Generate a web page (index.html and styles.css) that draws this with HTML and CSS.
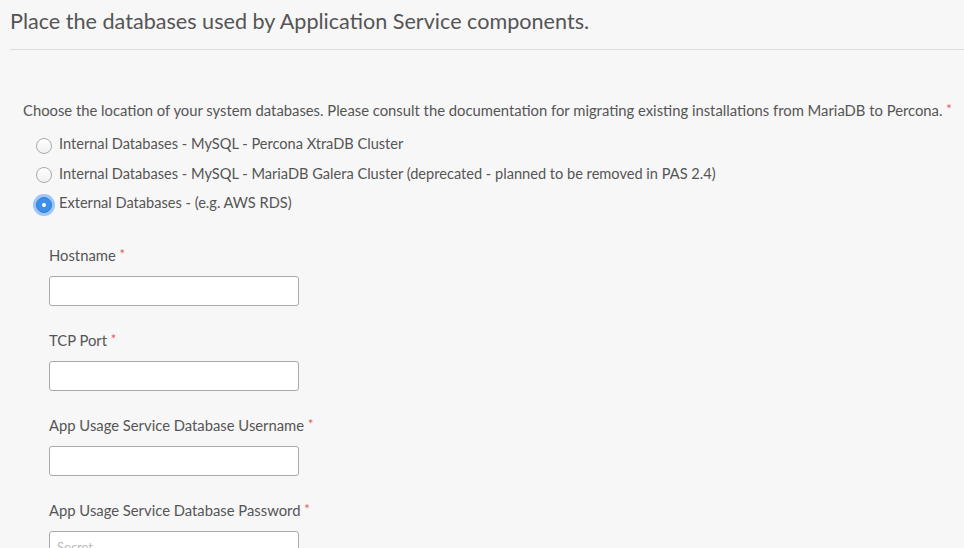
FILE: index.html
```html
<!DOCTYPE html>
<html>
<head>
<meta charset="utf-8">
<link rel="stylesheet" href="styles.css">
</head>
<body>
<div class="page">
  <h2 class="title">Place the databases used by Application Service components.</h2>
  <div class="content">
    <p class="question">Choose the location of your system databases. Please consult the documentation for migrating existing installations from MariaDB to Percona. <span class="req">*</span></p>
    <div class="options">
      <label class="option"><span class="radio"></span><span>Internal Databases - MySQL - Percona XtraDB Cluster</span></label>
      <label class="option"><span class="radio"></span><span>Internal Databases - MySQL - MariaDB Galera Cluster (deprecated - planned to be removed in PAS 2.4)</span></label>
      <label class="option"><span class="radio checked"></span><span>External Databases - (e.g. AWS RDS)</span></label>
    </div>
    <div class="fields">
      <div class="field">
        <div class="label">Hostname <span class="req">*</span></div>
        <div class="input"></div>
      </div>
      <div class="field">
        <div class="label">TCP Port <span class="req">*</span></div>
        <div class="input"></div>
      </div>
      <div class="field">
        <div class="label">App Usage Service Database Username <span class="req">*</span></div>
        <div class="input"></div>
      </div>
      <div class="field">
        <div class="label">App Usage Service Database Password <span class="req">*</span></div>
        <div class="input"><span class="ph">Secret</span></div>
      </div>
    </div>
  </div>
</div>
</body>
</html>
```
FILE: styles.css
```css
html, body {
  margin: 0;
  padding: 0;
  background: #f7f7f7;
  overflow: hidden;
  height: 548px;
}
body {
  font-family: "Lato", "Open Sans", sans-serif;
  color: #555;
}
.page {
  padding-left: 10px;
}
.title {
  margin: 0;
  padding: 6px 0 13px 0;
  font-size: 21.6px;
  font-weight: 400;
  color: #555;
  border-bottom: 1px solid #dcdcdc;
  line-height: 30px;
}
.content {
  padding: 50px 0 0 13px;
}
.question {
  margin: 0;
  font-size: 14.8px;
  line-height: 20px;
  color: #555;
  white-space: nowrap;
}
.req {
  color: #e8595a;
  font-size: 13px;
  vertical-align: 2px;
  line-height: 16px;
}
.options {
  display: flex;
  flex-direction: column;
  padding-top: 9px;
  padding-left: 13px;
}
.option {
  display: flex;
  align-items: center;
  gap: 7px;
  height: 29.5px;
  font-size: 14.6px;
}
.radio {
  width: 14px;
  height: 14px;
  border: 1px solid #a9a9a9;
  border-radius: 50%;
  background: linear-gradient(#fff, #f0f0f0);
  margin-top: 4px;
  box-sizing: content-box;
  flex: none;
}
.radio.checked {
  background: #3d8fe8;
  border-color: #2f7fd9;
  box-shadow: 0 0 0 3px rgba(99, 164, 245, 0.6);
  position: relative;
}
.radio.checked::after {
  content: "";
  position: absolute;
  left: 5px;
  top: 5px;
  width: 4px;
  height: 4px;
  border-radius: 50%;
  background: #fff;
}
.fields {
  padding-left: 26px;
  padding-top: 27px;
  display: flex;
  flex-direction: column;
  gap: 24px;
}
.field {
  display: flex;
  flex-direction: column;
  gap: 11px;
}
.label {
  font-size: 14.8px;
  line-height: 20px;
}
.input {
  width: 241px;
  height: 28px;
  border: 1px solid #aaa;
  border-radius: 3px;
  background: #fff;
  display: flex;
  align-items: center;
  padding-left: 7px;
  box-sizing: content-box;
}
.input .ph {
  color: #bbb;
  font-size: 13px;
  margin-top: 2px;
}
```
